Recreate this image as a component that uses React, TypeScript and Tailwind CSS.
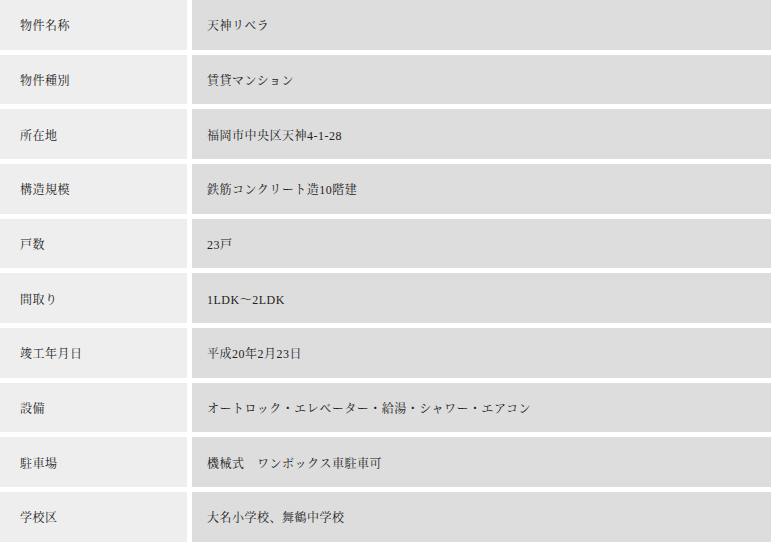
const rows = [
  { label: "物件名称", value: "天神リベラ" },
  { label: "物件種別", value: "賃貸マンション" },
  { label: "所在地", value: "福岡市中央区天神4-1-28" },
  { label: "構造規模", value: "鉄筋コンクリート造10階建" },
  { label: "戸数", value: "23戸" },
  { label: "間取り", value: "1LDK～2LDK" },
  { label: "竣工年月日", value: "平成20年2月23日" },
  { label: "設備", value: "オートロック・エレベーター・給湯・シャワー・エアコン" },
  { label: "駐車場", value: "機械式　ワンボックス車駐車可" },
  { label: "学校区", value: "大名小学校、舞鶴中学校" },
];

export default function App() {
  return (
    <div
      className="w-[771px] h-[542px] overflow-hidden bg-white text-[12px] text-[#222] tracking-[0.5px]"
      style={{ fontFamily: '"Liberation Serif", "Noto Serif CJK JP", "Noto Sans CJK JP", serif' }}
    >
      <div className="grid grid-cols-[187px_1fr] gap-x-[5px] gap-y-[5px]">
        {rows.map((r) => (
          <div key={r.label} className="contents">
            <div className="h-[49.67px] flex items-center pl-[20px] pt-[3px] bg-[#eeeeee]">{r.label}</div>
            <div className="h-[49.67px] flex items-center pl-[15px] pt-[3px] bg-[#dddddd]">{r.value}</div>
          </div>
        ))}
      </div>
    </div>
  );
}
